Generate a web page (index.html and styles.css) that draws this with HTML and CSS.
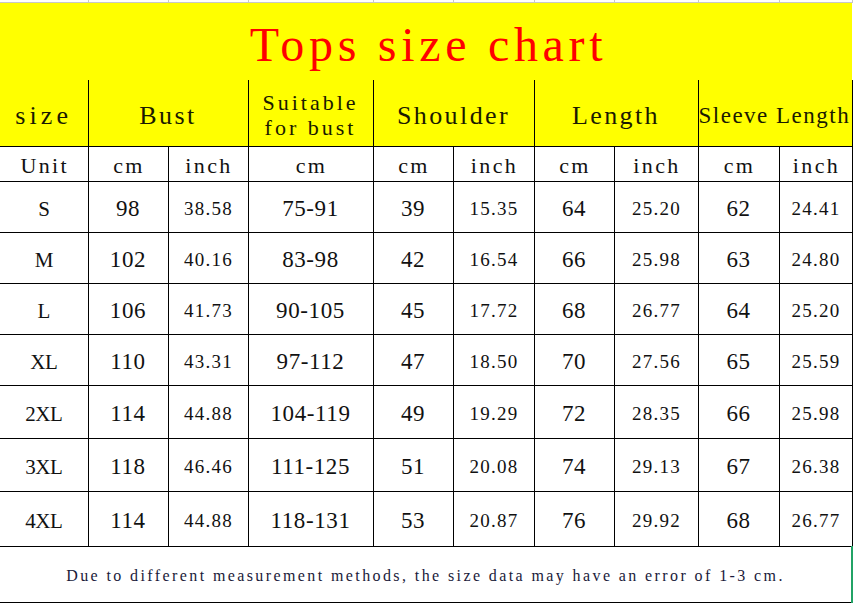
FILE: index.html
```html
<!DOCTYPE html>
<html>
<head>
<meta charset="utf-8">
<link rel="stylesheet" href="styles.css">
</head>
<body>
<table class="sheet">
  <colgroup>
    <col class="c88"><col class="c80"><col class="c80"><col class="c125"><col class="c80"><col class="c81"><col class="c80"><col class="c84"><col class="c81"><col class="c73">
  </colgroup>
  <tr class="grid">
    <td></td><td></td><td></td><td></td><td></td><td></td><td></td><td></td><td></td><td></td>
  </tr>
  <tr class="title-row">
    <td colspan="10" class="title">Tops size chart</td>
  </tr>
  <tr class="head-row">
    <td class="h first size">size</td>
    <td class="h" colspan="2">Bust</td>
    <td class="h suit">Suitable<br>for bust</td>
    <td class="h" colspan="2">Shoulder</td>
    <td class="h" colspan="2">Length</td>
    <td class="h sleeve" colspan="2">Sleeve Length</td>
  </tr>
  <tr class="unit-row">
    <td class="u first">Unit</td>
    <td class="u">cm</td><td class="u">inch</td>
    <td class="u">cm</td>
    <td class="u">cm</td><td class="u">inch</td>
    <td class="u">cm</td><td class="u">inch</td>
    <td class="u">cm</td><td class="u">inch</td>
  </tr>
  <tr class="row r51">
    <td class="sz first">S</td><td class="n">98</td><td class="d">38.58</td><td class="n">75-91</td><td class="n">39</td><td class="d">15.35</td><td class="n">64</td><td class="d">25.20</td><td class="n">62</td><td class="d">24.41</td>
  </tr>
  <tr class="row r51">
    <td class="sz first">M</td><td class="n">102</td><td class="d">40.16</td><td class="n">83-98</td><td class="n">42</td><td class="d">16.54</td><td class="n">66</td><td class="d">25.98</td><td class="n">63</td><td class="d">24.80</td>
  </tr>
  <tr class="row r51">
    <td class="sz first">L</td><td class="n">106</td><td class="d">41.73</td><td class="n">90-105</td><td class="n">45</td><td class="d">17.72</td><td class="n">68</td><td class="d">26.77</td><td class="n">64</td><td class="d">25.20</td>
  </tr>
  <tr class="row r51">
    <td class="sz first">XL</td><td class="n">110</td><td class="d">43.31</td><td class="n">97-112</td><td class="n">47</td><td class="d">18.50</td><td class="n">70</td><td class="d">27.56</td><td class="n">65</td><td class="d">25.59</td>
  </tr>
  <tr class="row r53">
    <td class="sz first">2XL</td><td class="n">114</td><td class="d">44.88</td><td class="n">104-119</td><td class="n">49</td><td class="d">19.29</td><td class="n">72</td><td class="d">28.35</td><td class="n">66</td><td class="d">25.98</td>
  </tr>
  <tr class="row r53">
    <td class="sz first">3XL</td><td class="n">118</td><td class="d">46.46</td><td class="n">111-125</td><td class="n">51</td><td class="d">20.08</td><td class="n">74</td><td class="d">29.13</td><td class="n">67</td><td class="d">26.38</td>
  </tr>
  <tr class="row r55">
    <td class="sz first">4XL</td><td class="n">114</td><td class="d">44.88</td><td class="n">118-131</td><td class="n">53</td><td class="d">20.87</td><td class="n">76</td><td class="d">29.92</td><td class="n">68</td><td class="d">26.77</td>
  </tr>
  <tr class="foot-row">
    <td colspan="10" class="foot">Due to different measurement methods, the size data may have an error of 1-3 cm.</td>
  </tr>
</table>
</body>
</html>
```

FILE: styles.css
```css
html, body {
  margin: 0;
  padding: 0;
  background: #ffffff;
}

.sheet {
  border-collapse: collapse;
  table-layout: fixed;
  width: 852px;
}

.c88 { width: 88px; }
.c80 { width: 80px; }
.c81 { width: 81px; }
.c84 { width: 84px; }
.c125 { width: 125px; }
.c73 { width: 73px; }

.sheet td {
  padding: 0;
  text-align: center;
  vertical-align: middle;
  white-space: nowrap;
  overflow: hidden;
  color: #111111;
  font-family: "Liberation Serif", serif;
}

.sheet .grid td {
  height: 2px;
  border-right: 1px solid #c8c8c8;
  border-bottom: 1px solid #c8c8c8;
}

.sheet .title-row td {
  height: 71px;
}

.sheet td.title {
  background: #ffff00;
  color: #ff0000;
  font-size: 48px;
  letter-spacing: 4.7px;
  padding-top: 6px;
  padding-left: 5px;
}

.sheet .head-row td {
  height: 61px;
  background: #ffff00;
  border: 1px solid #000;
  border-top: none;
  font-size: 26px;
  letter-spacing: 2.4px;
  padding-top: 5px;
  color: #1a1a00;
}

.sheet .head-row td.size {
  letter-spacing: 4.2px;
}

.sheet .head-row td.first,
.sheet .unit-row td.first,
.sheet .row td.first {
  border-left: none;
}

.sheet .head-row td.suit {
  white-space: normal;
  font-size: 22px;
  line-height: 25px;
  letter-spacing: 3px;
  padding-top: 4px;
  padding-bottom: 0;
  height: 62px;
}

.sheet .head-row td.sleeve {
  text-align: left;
  font-size: 23px;
  letter-spacing: 1.5px;
}

.sheet .unit-row td {
  height: 31px;
  border: 1px solid #000;
  font-size: 22px;
  letter-spacing: 2.4px;
  padding-left: 2px;
  padding-top: 3px;
}

.sheet .row td {
  border: 1px solid #000;
  padding-top: 4px;
}

.sheet .r51 td { height: 46px; }
.sheet .r53 td { height: 48px; }
.sheet .r55 td { height: 50px; }

.sheet td.sz {
  font-size: 21px;
  letter-spacing: -0.5px;
}

.sheet td.n {
  font-size: 23px;
  letter-spacing: 0.6px;
}

.sheet td.d {
  font-size: 19px;
  letter-spacing: 1.3px;
  padding-left: 1px;
}

.sheet .foot-row td {
  height: 53px;
  border-top: 1px solid #000;
  border-bottom: 1px solid #000;
  border-right: 2px solid #21a366;
}

.sheet td.foot {
  font-size: 16px;
  letter-spacing: 2.4px;
  color: #1a1a3a;
  padding-top: 2px;
}
```
